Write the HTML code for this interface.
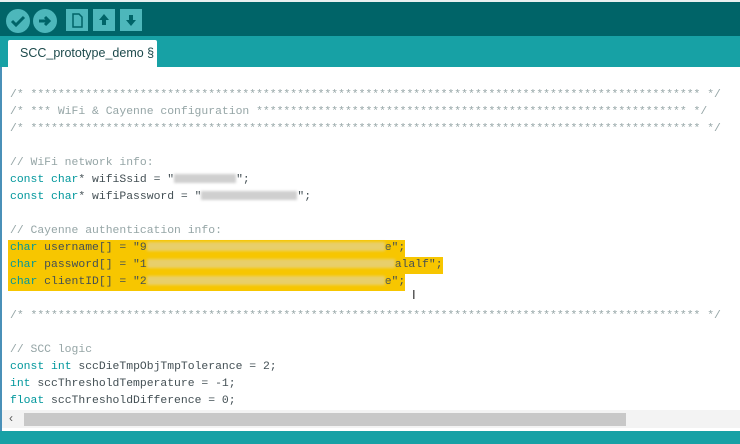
<!DOCTYPE html>
<html><head><meta charset="utf-8"><style>
*{margin:0;padding:0;box-sizing:border-box}
body{width:740px;height:444px;overflow:hidden;background:#fff;position:relative;font-family:"Liberation Sans",sans-serif}
#top{position:absolute;left:0;top:0;width:740px;height:36px;background:#006468;border-top:2px solid #e8f0f0}
.rb{position:absolute;top:7px;width:24px;height:24px;border-radius:50%;background:#4db7bb}
.sb{position:absolute;top:7px;width:22px;height:22px;background:#4db7bb}
#tabs{position:absolute;left:0;top:36px;width:740px;height:31px;background:#17a1a5}
#tab{position:absolute;left:8px;top:4px;width:149px;height:27px;background:#fff;border-radius:2px 2px 0 0;font-size:12.5px;color:#1d4a4c;padding:6px 0 0 12px}
#ed{position:absolute;left:0;top:67px;width:740px;height:365px;background:#fff;border-left:2px solid #4a90b8}
pre{position:absolute;left:8px;top:20px;font-family:"Liberation Mono",monospace;font-size:11.4px;line-height:17px;color:#434f54}
.c{color:#95a5a6}.k{color:#00979c}
.hl{background:#f7c600;padding-left:2px;margin-left:-2px;display:inline-block;height:17px;line-height:17px;vertical-align:top}
.bl{display:inline-block;height:9px;background:#cfcfcf;filter:blur(1.2px);vertical-align:middle}
.hl .bl{background:#e8cf6a}
#sc{position:absolute;left:2px;top:410px;width:738px;height:18px;background:#f3f3f3}
#th{position:absolute;left:24px;top:413px;width:602px;height:13px;background:#c8c8c8}
#bot{position:absolute;left:0;top:431px;width:740px;height:13px;background:#17a1a5}
</style></head><body>
<div id="top">
<div class="rb" style="left:6px"><svg width="24" height="24"><path d="M6 12l4 4 8-8" stroke="#006468" stroke-width="3" fill="none"/></svg></div>
<div class="rb" style="left:33px"><svg width="24" height="24"><path d="M6 12h9M12 8l4 4-4 4" stroke="#006468" stroke-width="3" fill="none"/></svg></div>
<div class="sb" style="left:66px"><svg width="22" height="22"><path d="M7 5h6l3 3v10H7z" stroke="#006468" stroke-width="1.5" fill="none"/></svg></div>
<div class="sb" style="left:93px"><svg width="22" height="22"><path d="M11 5l-5 6h3v5h4v-5h3z" fill="#006468"/></svg></div>
<div class="sb" style="left:120px"><svg width="22" height="22"><path d="M11 17l-5-6h3V6h4v5h3z" fill="#006468"/></svg></div>
</div>
<div id="tabs"><div id="tab">SCC_prototype_demo §</div></div>
<div id="ed">
<pre><span class="c">/* ************************************************************************************************** */
/* *** WiFi &amp; Cayenne configuration *************************************************************** */
/* ************************************************************************************************** */</span>

<span class="c">// WiFi network info:</span>
<span class="k">const</span> <span class="k">char</span>* wifiSsid = "<span class="bl" style="width:62px"></span>";
<span class="k">const</span> <span class="k">char</span>* wifiPassword = "<span class="bl" style="width:96px"></span>";

<span class="c">// Cayenne authentication info:</span>
<span class="hl"><span class="k">char</span> username[] = "9<span class="bl" style="width:238px"></span>e";</span>
<span class="hl"><span class="k">char</span> password[] = "1<span class="bl" style="width:248px"></span>alalf";</span>
<span class="hl"><span class="k">char</span> clientID[] = "2<span class="bl" style="width:238px"></span>e";</span>

<span class="c">/* ************************************************************************************************** */</span>

<span class="c">// SCC logic</span>
<span class="k">const</span> <span class="k">int</span> sccDieTmpObjTmpTolerance = 2;
<span class="k">int</span> sccThresholdTemperature = -1;
<span class="k">float</span> sccThresholdDifference = 0;</pre>
<div style="position:absolute;left:410px;top:220px;font-size:13px;color:#333">I</div>
</div>
<div id="sc"><span style="position:absolute;left:7px;top:1px;font-size:12px;color:#555">&lsaquo;</span></div>
<div id="th"></div>
<div id="bot"></div>
</body></html>
